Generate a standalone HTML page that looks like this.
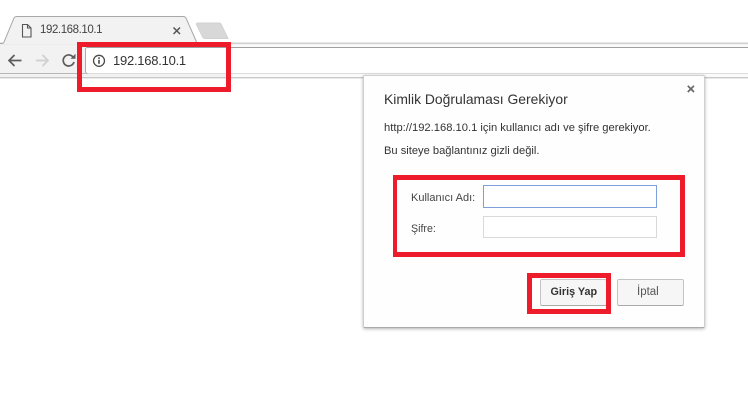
<!DOCTYPE html>
<html><head><meta charset="utf-8">
<style>
html,body{margin:0;padding:0;background:#fff}
#p{position:relative;width:748px;height:412px;overflow:hidden;background:#fff;font-family:"Liberation Sans",sans-serif;color:#222}
#p div,#p span.t{position:absolute;white-space:nowrap;box-sizing:border-box}
.r{border:5px solid #ee1c2b}
.t{line-height:14px}
</style></head><body>
<div id="p">
<svg style="position:absolute;left:0;top:0" width="748" height="90">
<rect x="0" y="43" width="748" height="35" fill="#f2f2f2"/>
<rect x="231" y="44" width="517" height="33" fill="#fbfbfb"/>
<rect x="0" y="42.500" width="748" height="1.700" fill="#d2d2d2"/>
<rect x="0" y="73" width="748" height="1" fill="#b8b8b8"/>
<rect x="0" y="77" width="748" height="1.400" fill="#c9c9c9"/>
<rect x="85" y="47" width="663" height="26.500" fill="#fff"/>
<rect x="87" y="47" width="661" height="1" fill="#a0a0a0"/>
<path d="M87.500 73.500Q85.500 73.500 85.500 71.500V49.500Q85.500 47.500 87.500 47.500" fill="none" stroke="#aaa"/>
<path d="M0 43.500H2Q3.500 43.500 4 42L14 18Q14.800 16.500 17 16.500H183Q185 16.500 186 18L197 44H0Z" fill="#f2f2f2"/>
<path d="M0 43.500H2Q3.500 43.500 4 42L14 18Q14.800 16.500 17 16.500H183Q185 16.500 186 18L197 43" fill="none" stroke="#a8a8a8"/>
<path d="M196.500 24.500Q196 23 198 23H219Q220.500 23 221 24L228 38.500H205Q203.500 38.500 203 37.500Z" fill="#d8d8d8" stroke="#d2d2d2"/>
<path d="M22.500 24.500H27.500L31 28V37H22.500Z M27.500 24.500V28H31" fill="none" stroke="#555" stroke-width="1.100"/>
<path d="M173.500 27.500L180 34M180 27.500L173.500 34" stroke="#555" stroke-width="1.500"/>
<path d="M21.500 60.500H9.500M14.500 55L9 60.500L14.500 66" fill="none" stroke="#5c5c5c" stroke-width="1.700"/>
<path d="M36 60.500H47.500M42.500 55L48 60.500L42.500 66" fill="none" stroke="#d0d0d0" stroke-width="1.700"/>
<path d="M73 57A5.500 5.500 0 1 0 74 62" fill="none" stroke="#5c5c5c" stroke-width="1.700"/>
<path d="M70.500 58.800H75.500V53.800Z" fill="#5c5c5c"/>
<circle cx="99" cy="60.800" r="5.500" fill="none" stroke="#4a4a4a" stroke-width="1.300"/>
<rect x="98.200" y="59.800" width="1.600" height="4" fill="#4a4a4a"/>
<rect x="98.200" y="57.300" width="1.600" height="1.600" fill="#4a4a4a"/>
</svg>
<span class="t" style="left:40px;top:23px;font-size:11.500px;letter-spacing:-.42px;color:#444">192.168.10.1</span>
<span class="t" style="left:113px;top:54px;font-size:13px;letter-spacing:-.25px;color:#333">192.168.10.1</span>
<div class="r" style="left:77px;top:42px;width:154px;height:50px"></div>

<div style="left:363px;top:75px;width:342px;height:253px;background:#fefefe;border:1px solid #cfcfcf;border-bottom-color:#aaa;border-radius:2px;box-shadow:0 1px 3px rgba(0,0,0,.3)"></div>
<svg style="position:absolute;left:687px;top:85px" width="8" height="8"><path d="M.8 .8L7 7M7 .8L.8 7" stroke="#666" stroke-width="1.700"/></svg>
<span class="t" style="left:384px;top:92px;font-size:13.900px;color:#333">Kimlik Doğrulaması Gerekiyor</span>
<span class="t" style="left:384px;top:121px;font-size:11.200px;color:#333">http://192.168.10.1 için kullanıcı adı ve şifre gerekiyor.</span>
<span class="t" style="left:384px;top:144px;font-size:11.150px;color:#333">Bu siteye bağlantınız gizli değil.</span>
<div class="r" style="left:393px;top:175px;width:292px;height:82px;border-left-width:4px"></div>
<span class="t" style="left:411px;top:191px;font-size:11px;color:#444">Kullanıcı Adı:</span>
<span class="t" style="left:411px;top:222px;font-size:10.650px;color:#444">Şifre:</span>
<div style="left:483px;top:185px;width:174px;height:23px;border:1px solid #7f9fdc;background:#fff"></div>
<div style="left:483px;top:216px;width:174px;height:22px;border:1px solid #d9d9d9;background:#fff"></div>
<div style="left:540px;top:279px;width:67px;height:27px;background:#f6f6f6;border:1px solid #c4c4c4;border-bottom-color:#aaa;border-radius:2px"></div>
<div style="left:617px;top:279px;width:67px;height:27px;background:#f6f6f6;border:1px solid #c4c4c4;border-bottom-color:#aaa;border-radius:2px"></div>
<span class="t" style="left:550.500px;top:285px;font-size:10.800px;font-weight:bold;color:#333">Giriş Yap</span>
<span class="t" style="left:637px;top:285px;font-size:11.500px;color:#555">İptal</span>
<div class="r" style="left:527px;top:273px;width:84px;height:41px"></div>
</div>
</body></html>
